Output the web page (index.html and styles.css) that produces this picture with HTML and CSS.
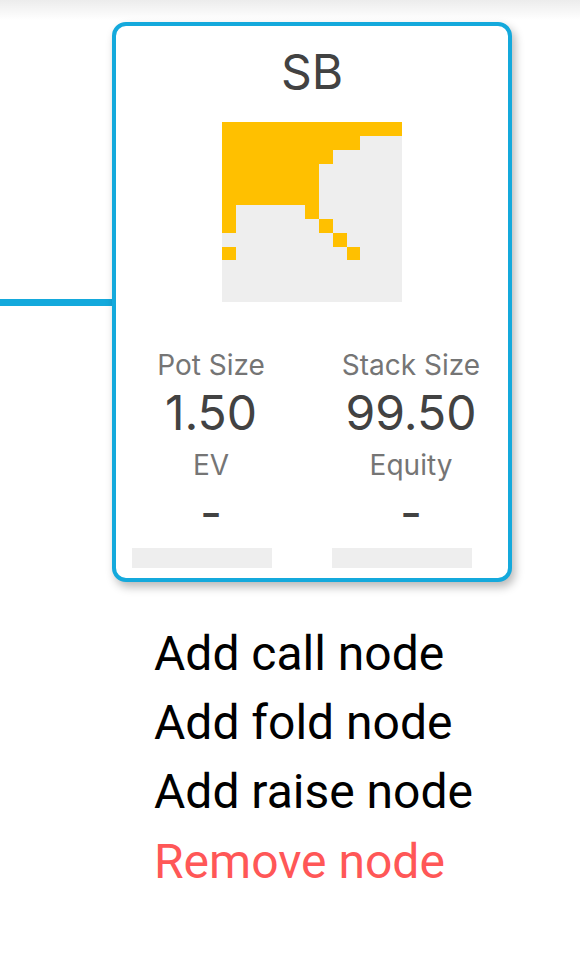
FILE: index.html
```html
<!DOCTYPE html>
<html>
<head>
<meta charset="utf-8">
<link rel="stylesheet" href="styles.css">
</head>
<body>
<div class="topshade"></div>
<div class="canvas">
  <div class="edge"></div>
  <div class="card">
    <div class="title">SB</div>
    <svg class="range" viewBox="0 0 13 13" shape-rendering="crispEdges">
      <rect x="0" y="0" width="13" height="13" fill="#eeeeee"/>
      <g fill="#ffc000">
        <rect x="0" y="0" width="13" height="1"/>
        <rect x="0" y="1" width="10" height="1"/>
        <rect x="0" y="2" width="8" height="1"/>
        <rect x="0" y="3" width="7" height="3"/>
        <rect x="0" y="6" width="1" height="2"/>
        <rect x="6" y="6" width="1" height="1"/>
        <rect x="7" y="7" width="1" height="1"/>
        <rect x="8" y="8" width="1" height="1"/>
        <rect x="0" y="9" width="1" height="1"/>
        <rect x="9" y="9" width="1" height="1"/>
      </g>
    </svg>
    <div class="stats">
      <div class="col">
        <div class="label">Pot Size</div>
        <div class="value">1.50</div>
        <div class="label sub">EV</div>
        <div class="value dash">-</div>
        <div class="bar"></div>
      </div>
      <div class="col">
        <div class="label">Stack Size</div>
        <div class="value">99.50</div>
        <div class="label sub">Equity</div>
        <div class="value dash">-</div>
        <div class="bar"></div>
      </div>
    </div>
  </div>
</div>
<ul class="menu">
  <li>Add call node</li>
  <li>Add fold node</li>
  <li>Add raise node</li>
  <li class="danger">Remove node</li>
</ul>
</body>
</html>
```

FILE: styles.css
```css
html, body {
  margin: 0;
  padding: 0;
  background: #ffffff;
  font-family: "Inter", "Noto Sans", sans-serif;
}
.topshade {
  height: 20px;
  background: linear-gradient(#ececec, #ffffff);
}
.canvas {
  display: flex;
  align-items: center;
  margin-top: 2px;
}
.edge {
  width: 112px;
  height: 7px;
  background: #14a9dc;
}
.card {
  box-sizing: border-box;
  width: 400px;
  height: 560px;
  border: 4px solid #14a9dc;
  border-radius: 14px;
  background: #fff;
  box-shadow: 3px 5px 10px rgba(0, 0, 0, 0.28);
  display: flex;
  flex-direction: column;
  align-items: center;
  padding-top: 21.5px;
}
.title {
  font-size: 48px;
  line-height: 48px;
  color: #424242;
}
.range {
  display: block;
  width: 180px;
  height: 180px;
  margin-top: 26.5px;
}
.stats {
  display: flex;
  align-self: flex-start;
  margin-left: -5px;
  margin-top: 49px;
}
.col {
  width: 200px;
  display: flex;
  flex-direction: column;
  align-items: center;
}
.label {
  font-size: 28px;
  line-height: 28px;
  color: #757575;
}
.value {
  font-size: 48px;
  line-height: 48px;
  color: #424242;
  margin-top: 9.7px;
}
.label.sub {
  margin-top: 14.3px;
}
.dash {
  margin-top: 10px;
}
.bar {
  align-self: flex-start;
  margin-left: 21px;
  width: 140px;
  height: 20px;
  background: #eeeeee;
  margin-top: 11px;
}
.menu {
  list-style: none;
  margin: 36.9px 0 0 154px;
  padding: 0;
  font-family: "Roboto", "Liberation Sans", sans-serif;
}
.menu li {
  font-size: 48px;
  line-height: 69.3px;
  color: #000;
}
.menu li.danger {
  color: #ff5757;
}
```
